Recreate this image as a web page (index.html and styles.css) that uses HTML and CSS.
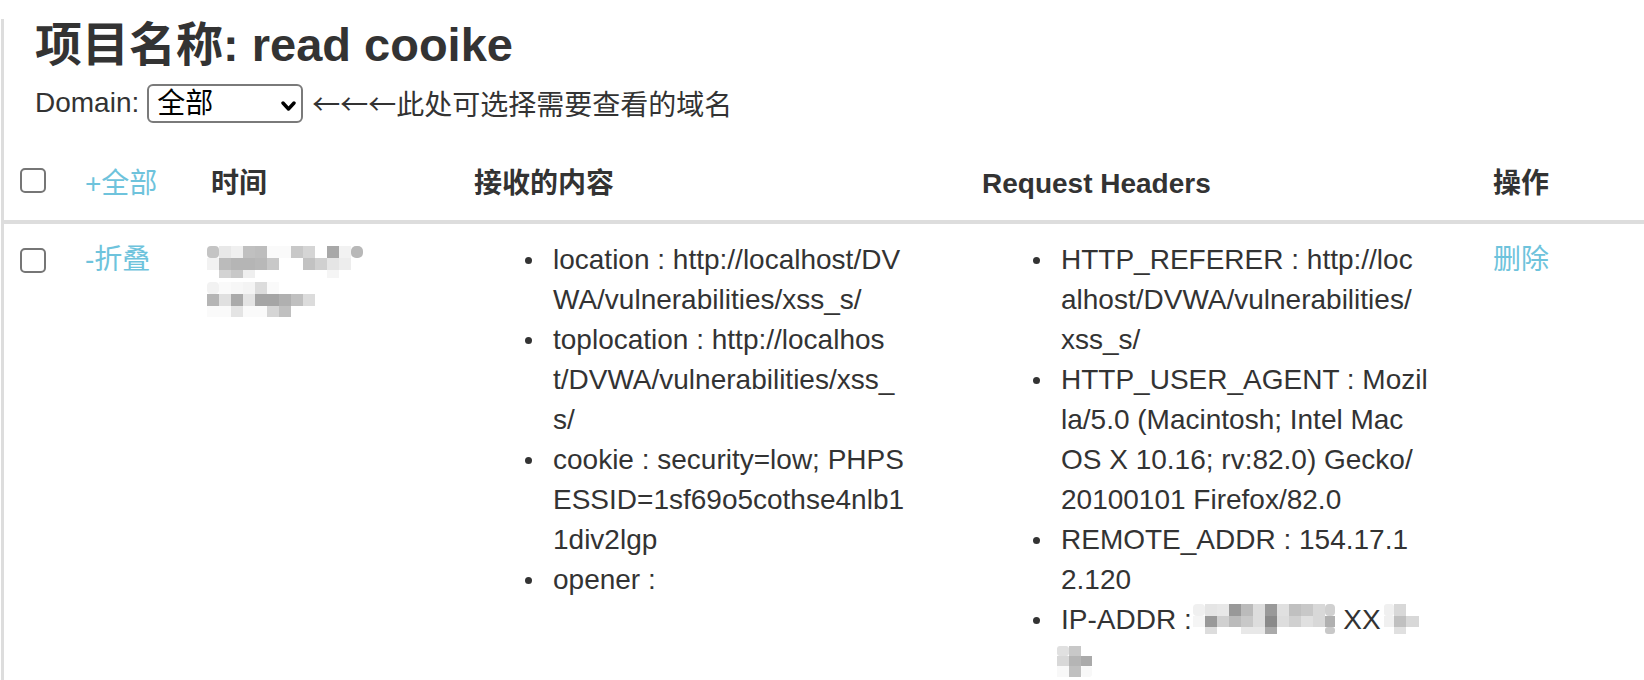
FILE: index.html
```html
<!DOCTYPE html>
<html lang="zh-CN">
<head>
<meta charset="utf-8">
<title>read cooike</title>
<link rel="stylesheet" href="styles.css">
</head>
<body>
<div class="page">
  <div class="head">
    <h3 class="title">项目名称: read cooike</h3>
    <div class="domain-row">
      <span class="domain-label">Domain:</span>
      <span class="select-wrap">
        <select class="domain-select"><option>全部</option></select>
        <svg class="chev" viewBox="0 0 15 11" width="15" height="11"><path d="M2 2 L7.5 8 L13 2" fill="none" stroke="#000" stroke-width="3.4" stroke-linecap="round" stroke-linejoin="round"/></svg>
      </span>
      <span class="hint"><span class="arrows">←←←</span>此处可选择需要查看的域名</span>
    </div>
  </div>

  <table class="data-table">
    <colgroup>
      <col class="c-check">
      <col class="c-toggle">
      <col class="c-time">
      <col class="c-content">
      <col class="c-headers">
      <col class="c-op">
    </colgroup>
    <thead>
      <tr>
        <th><input type="checkbox" class="check check-head"></th>
        <th class="th-link"><a href="#">+全部</a></th>
        <th>时间</th>
        <th>接收的内容</th>
        <th>Request Headers</th>
        <th>操作</th>
      </tr>
    </thead>
    <tbody>
      <tr>
        <td><input type="checkbox" class="check check-row"></td>
        <td><a href="#">-折叠</a></td>
        <td>
          <svg class="time-blur" width="156" height="72" viewBox="0 0 156 72">
            <g>
              <rect x="0" y="0" width="12" height="12" rx="4" fill="#c4c4c4"/>
              <rect x="12" y="0" width="12" height="12" fill="#e8e8e8"/>
              <rect x="24" y="0" width="12" height="12" fill="#f0f0f0"/>
              <rect x="36" y="0" width="12" height="12" fill="#c0c0c0"/>
              <rect x="48" y="0" width="12" height="12" fill="#bdbdbd"/>
              <rect x="60" y="0" width="12" height="12" fill="#fafafa"/>
              <rect x="72" y="0" width="12" height="12" fill="#fafafa"/>
              <rect x="84" y="0" width="12" height="12" fill="#c8c8c8"/>
              <rect x="96" y="0" width="12" height="12" fill="#d5d5d5"/>
              <rect x="120" y="0" width="12" height="12" fill="#a8a8a8"/>
              <rect x="132" y="0" width="12" height="12" fill="#f2f2f2"/>
              <rect x="144" y="0" width="12" height="12" rx="5" fill="#b8b8b8"/>

              <rect x="0" y="12" width="12" height="12" fill="#f2f2f2"/>
              <rect x="12" y="12" width="12" height="12" fill="#bbbbbb"/>
              <rect x="24" y="12" width="12" height="12" fill="#b5b5b5"/>
              <rect x="36" y="12" width="12" height="12" fill="#b5b5b5"/>
              <rect x="48" y="12" width="12" height="12" fill="#b8b8b8"/>
              <rect x="60" y="12" width="12" height="12" fill="#c8c8c8"/>
              <rect x="96" y="12" width="12" height="12" fill="#c2c2c2"/>
              <rect x="108" y="12" width="12" height="12" fill="#d0d0d0"/>
              <rect x="120" y="12" width="12" height="12" fill="#e5e5e5"/>
              <rect x="132" y="12" width="12" height="12" fill="#ededed"/>

              <rect x="12" y="24" width="12" height="8" fill="#d3d3d3"/>
              <rect x="24" y="24" width="12" height="8" fill="#c8c8c8"/>
              <rect x="36" y="24" width="12" height="8" fill="#efefef"/>
              <rect x="120" y="24" width="12" height="8" fill="#f5f5f5"/>

              <rect x="0" y="36" width="12" height="12" rx="4" fill="#f2f2f2"/>
              <rect x="12" y="36" width="12" height="12" fill="#fafafa"/>
              <rect x="24" y="36" width="12" height="12" fill="#f7f7f7"/>
              <rect x="36" y="36" width="12" height="12" fill="#f4f4f4"/>
              <rect x="48" y="36" width="12" height="12" fill="#dcdcdc"/>
              <rect x="60" y="36" width="12" height="12" fill="#fafafa"/>

              <rect x="0" y="48" width="12" height="12" fill="#b5b5b5"/>
              <rect x="12" y="48" width="12" height="12" fill="#e0e0e0"/>
              <rect x="24" y="48" width="12" height="12" fill="#aaaaaa"/>
              <rect x="36" y="48" width="12" height="12" fill="#e4e4e4"/>
              <rect x="48" y="48" width="12" height="12" fill="#a5a5a5"/>
              <rect x="60" y="48" width="12" height="12" fill="#a5a5a5"/>
              <rect x="72" y="48" width="12" height="12" fill="#b0b0b0"/>
              <rect x="84" y="48" width="12" height="12" fill="#c0c0c0"/>
              <rect x="96" y="48" width="12" height="12" fill="#dcdcdc"/>

              <rect x="0" y="60" width="12" height="11" fill="#fafafa"/>
              <rect x="12" y="60" width="12" height="11" fill="#fafafa"/>
              <rect x="24" y="60" width="12" height="11" fill="#e4e4e4"/>
              <rect x="36" y="60" width="12" height="11" fill="#fafafa"/>
              <rect x="48" y="60" width="12" height="11" fill="#fafafa"/>
              <rect x="60" y="60" width="12" height="11" fill="#d5d5d5"/>
              <rect x="72" y="60" width="12" height="11" fill="#c0c0c0"/>
            </g>
          </svg>
        </td>
        <td>
          <ul class="kv-list">
            <li>location : http://localhost/DV<br>WA/vulnerabilities/xss_s/</li>
            <li>toplocation : http://localhos<br>t/DVWA/vulnerabilities/xss_<br>s/</li>
            <li>cookie : security=low; PHPS<br>ESSID=1sf69o5cothse4nlb1<br>1div2lgp</li>
            <li>opener : </li>
          </ul>
        </td>
        <td>
          <ul class="kv-list">
            <li>HTTP_REFERER : http://loc<br>alhost/DVWA/vulnerabilities/<br>xss_s/</li>
            <li>HTTP_USER_AGENT : Mozil<br>la/5.0 (Macintosh; Intel Mac<br>OS X 10.16; rv:82.0) Gecko/<br>20100101 Firefox/82.0</li>
            <li>REMOTE_ADDR : 154.17.1<br>2.120</li>
            <li>IP-ADDR : <svg class="ip-blur" width="142" height="30" viewBox="0 0 142 30">
                <rect x="0" y="0" width="12" height="12" rx="4" fill="#f0f0f0"/>
                <rect x="12" y="0" width="12" height="12" fill="#e5e5e5"/>
                <rect x="24" y="0" width="12" height="12" fill="#e8e8e8"/>
                <rect x="36" y="0" width="12" height="12" fill="#999999"/>
                <rect x="48" y="0" width="12" height="12" fill="#bbbbbb"/>
                <rect x="60" y="0" width="12" height="12" fill="#dddddd"/>
                <rect x="72" y="0" width="12" height="12" fill="#999999"/>
                <rect x="84" y="0" width="12" height="12" fill="#e0e0e0"/>
                <rect x="96" y="0" width="12" height="12" fill="#c0c0c0"/>
                <rect x="108" y="0" width="12" height="12" fill="#c8c8c8"/>
                <rect x="120" y="0" width="12" height="12" fill="#d8d8d8"/>
                <rect x="132" y="0" width="10" height="12" rx="4" fill="#d0d0d0"/>
                <rect x="0" y="12" width="12" height="11" fill="#f5f5f5"/>
                <rect x="12" y="12" width="12" height="11" fill="#999999"/>
                <rect x="24" y="12" width="12" height="11" fill="#d0d0d0"/>
                <rect x="36" y="12" width="12" height="11" fill="#bbbbbb"/>
                <rect x="48" y="12" width="12" height="11" fill="#c8c8c8"/>
                <rect x="60" y="12" width="12" height="11" fill="#dddddd"/>
                <rect x="72" y="12" width="12" height="11" fill="#8a8a8a"/>
                <rect x="84" y="12" width="12" height="11" fill="#dddddd"/>
                <rect x="96" y="12" width="12" height="11" fill="#d0d0d0"/>
                <rect x="108" y="12" width="12" height="11" fill="#e0e0e0"/>
                <rect x="120" y="12" width="12" height="11" fill="#d8d8d8"/>
                <rect x="132" y="12" width="10" height="11" fill="#b0b0b0"/>
                <rect x="12" y="23" width="12" height="7" fill="#dddddd"/>
                <rect x="48" y="23" width="12" height="7" fill="#e8e8e8"/>
                <rect x="60" y="23" width="12" height="7" fill="#e8e8e8"/>
                <rect x="72" y="23" width="12" height="7" fill="#aaaaaa"/>
                <rect x="132" y="23" width="10" height="7" rx="3" fill="#c8c8c8"/>
              </svg> XX<svg class="ip-blur-small" width="35" height="30" viewBox="0 0 35 30">
                <rect x="0" y="0" width="10" height="12" rx="3" fill="#f0f0f0"/>
                <rect x="10" y="0" width="12" height="12" fill="#d8d8d8"/>
                <rect x="0" y="12" width="10" height="11" fill="#f0f0f0"/>
                <rect x="10" y="12" width="12" height="11" fill="#c0c0c0"/>
                <rect x="22" y="12" width="13" height="11" fill="#d8d8d8"/>
                <rect x="10" y="23" width="12" height="7" fill="#e0e0e0"/>
              </svg><br><svg class="ip-blur-line2" width="35" height="31" viewBox="0 0 35 31">
                <rect x="0" y="0" width="12" height="10" rx="3" fill="#e0e0e0"/>
                <rect x="12" y="0" width="12" height="10" fill="#c8c8c8"/>
                <rect x="0" y="10" width="12" height="10" fill="#d8d8d8"/>
                <rect x="12" y="10" width="12" height="10" fill="#b5b5b5"/>
                <rect x="24" y="10" width="11" height="10" fill="#aaaaaa"/>
                <rect x="0" y="20" width="12" height="11" fill="#f8f8f8"/>
                <rect x="12" y="20" width="12" height="11" fill="#c0c0c0"/>
                <rect x="24" y="20" width="11" height="11" rx="3" fill="#f8f8f8"/>
              </svg></li>
          </ul>
        </td>
        <td><a href="#">删除</a></td>
      </tr>
    </tbody>
  </table>
</div>
</body>
</html>
```

FILE: styles.css
```css
html, body {
  margin: 0;
  padding: 0;
  background: #fff;
}

body {
  font-family: "Liberation Sans", "Noto Sans CJK SC", sans-serif;
  font-size: 28px;
  line-height: 40px;
  color: #333;
  overflow: hidden;
}

.page {
  margin-left: 1px;
  border-left: 3px solid #ddd;
  min-height: 680px;
}

.head {
  padding-left: 31px;
}

.title {
  margin: 19px 0 0;
  font-size: 47px;
  line-height: 52px;
  font-weight: bold;
  color: #333;
}

.domain-row {
  display: flex;
  align-items: flex-start;
  height: 40px;
  margin-top: 12px;
}

.domain-label {
  margin-right: 8px;
}

.select-wrap {
  position: relative;
  display: block;
  margin-top: 1px;
}

.domain-select {
  -webkit-appearance: none;
  appearance: none;
  display: block;
  width: 156px;
  height: 39px;
  margin: 0;
  padding: 0 0 0 8px;
  border: 2px solid #7a7a7a;
  border-radius: 6px;
  background: #fff;
  color: #000;
  font-family: "Liberation Sans", "Noto Sans CJK SC", sans-serif;
  font-size: 28px;
}

.chev {
  position: absolute;
  right: 7px;
  top: 17px;
  pointer-events: none;
}

.hint {
  margin-left: 9px;
}

.arrows {
  font-family: "Noto Sans CJK SC", sans-serif;
}

.data-table {
  width: 100%;
  margin-top: 25px;
  border-collapse: collapse;
  table-layout: fixed;
}

.c-check { width: 65px; }
.c-toggle { width: 126px; }
.c-time { width: 263px; }
.c-content { width: 508px; }
.c-headers { width: 511px; }

.data-table th,
.data-table td {
  padding: 16px;
  text-align: left;
  vertical-align: top;
}

.data-table th {
  font-weight: bold;
  border-bottom: 4px solid #ddd;
}

.data-table th.th-link {
  font-weight: normal;
}

a {
  color: #6ec3dc;
  text-decoration: none;
}

.check {
  -webkit-appearance: none;
  appearance: none;
  display: block;
  box-sizing: border-box;
  width: 26px;
  height: 25px;
  margin: 0;
  border: 2px solid #767676;
  border-radius: 5px;
  background: #fff;
}

.check-head {
  margin-top: 4px;
}

.check-row {
  margin-top: 8px;
}

.time-blur {
  display: block;
  margin: 6px 0 0 -4px;
}

.kv-list {
  margin: 0;
  padding-left: 79px;
  list-style: none;
  white-space: nowrap;
}

.kv-list li {
  position: relative;
  line-height: 40px;
}

.kv-list li::before {
  content: "";
  position: absolute;
  left: -28px;
  top: 17px;
  width: 7px;
  height: 7px;
  border-radius: 50%;
  background: #333;
}

.ip-blur {
  vertical-align: -5px;
  margin-left: -6px;
}

.ip-blur-small {
  vertical-align: -5px;
  margin-left: 3px;
}

.ip-blur-line2 {
  vertical-align: -8px;
  margin-left: -4px;
}
```
